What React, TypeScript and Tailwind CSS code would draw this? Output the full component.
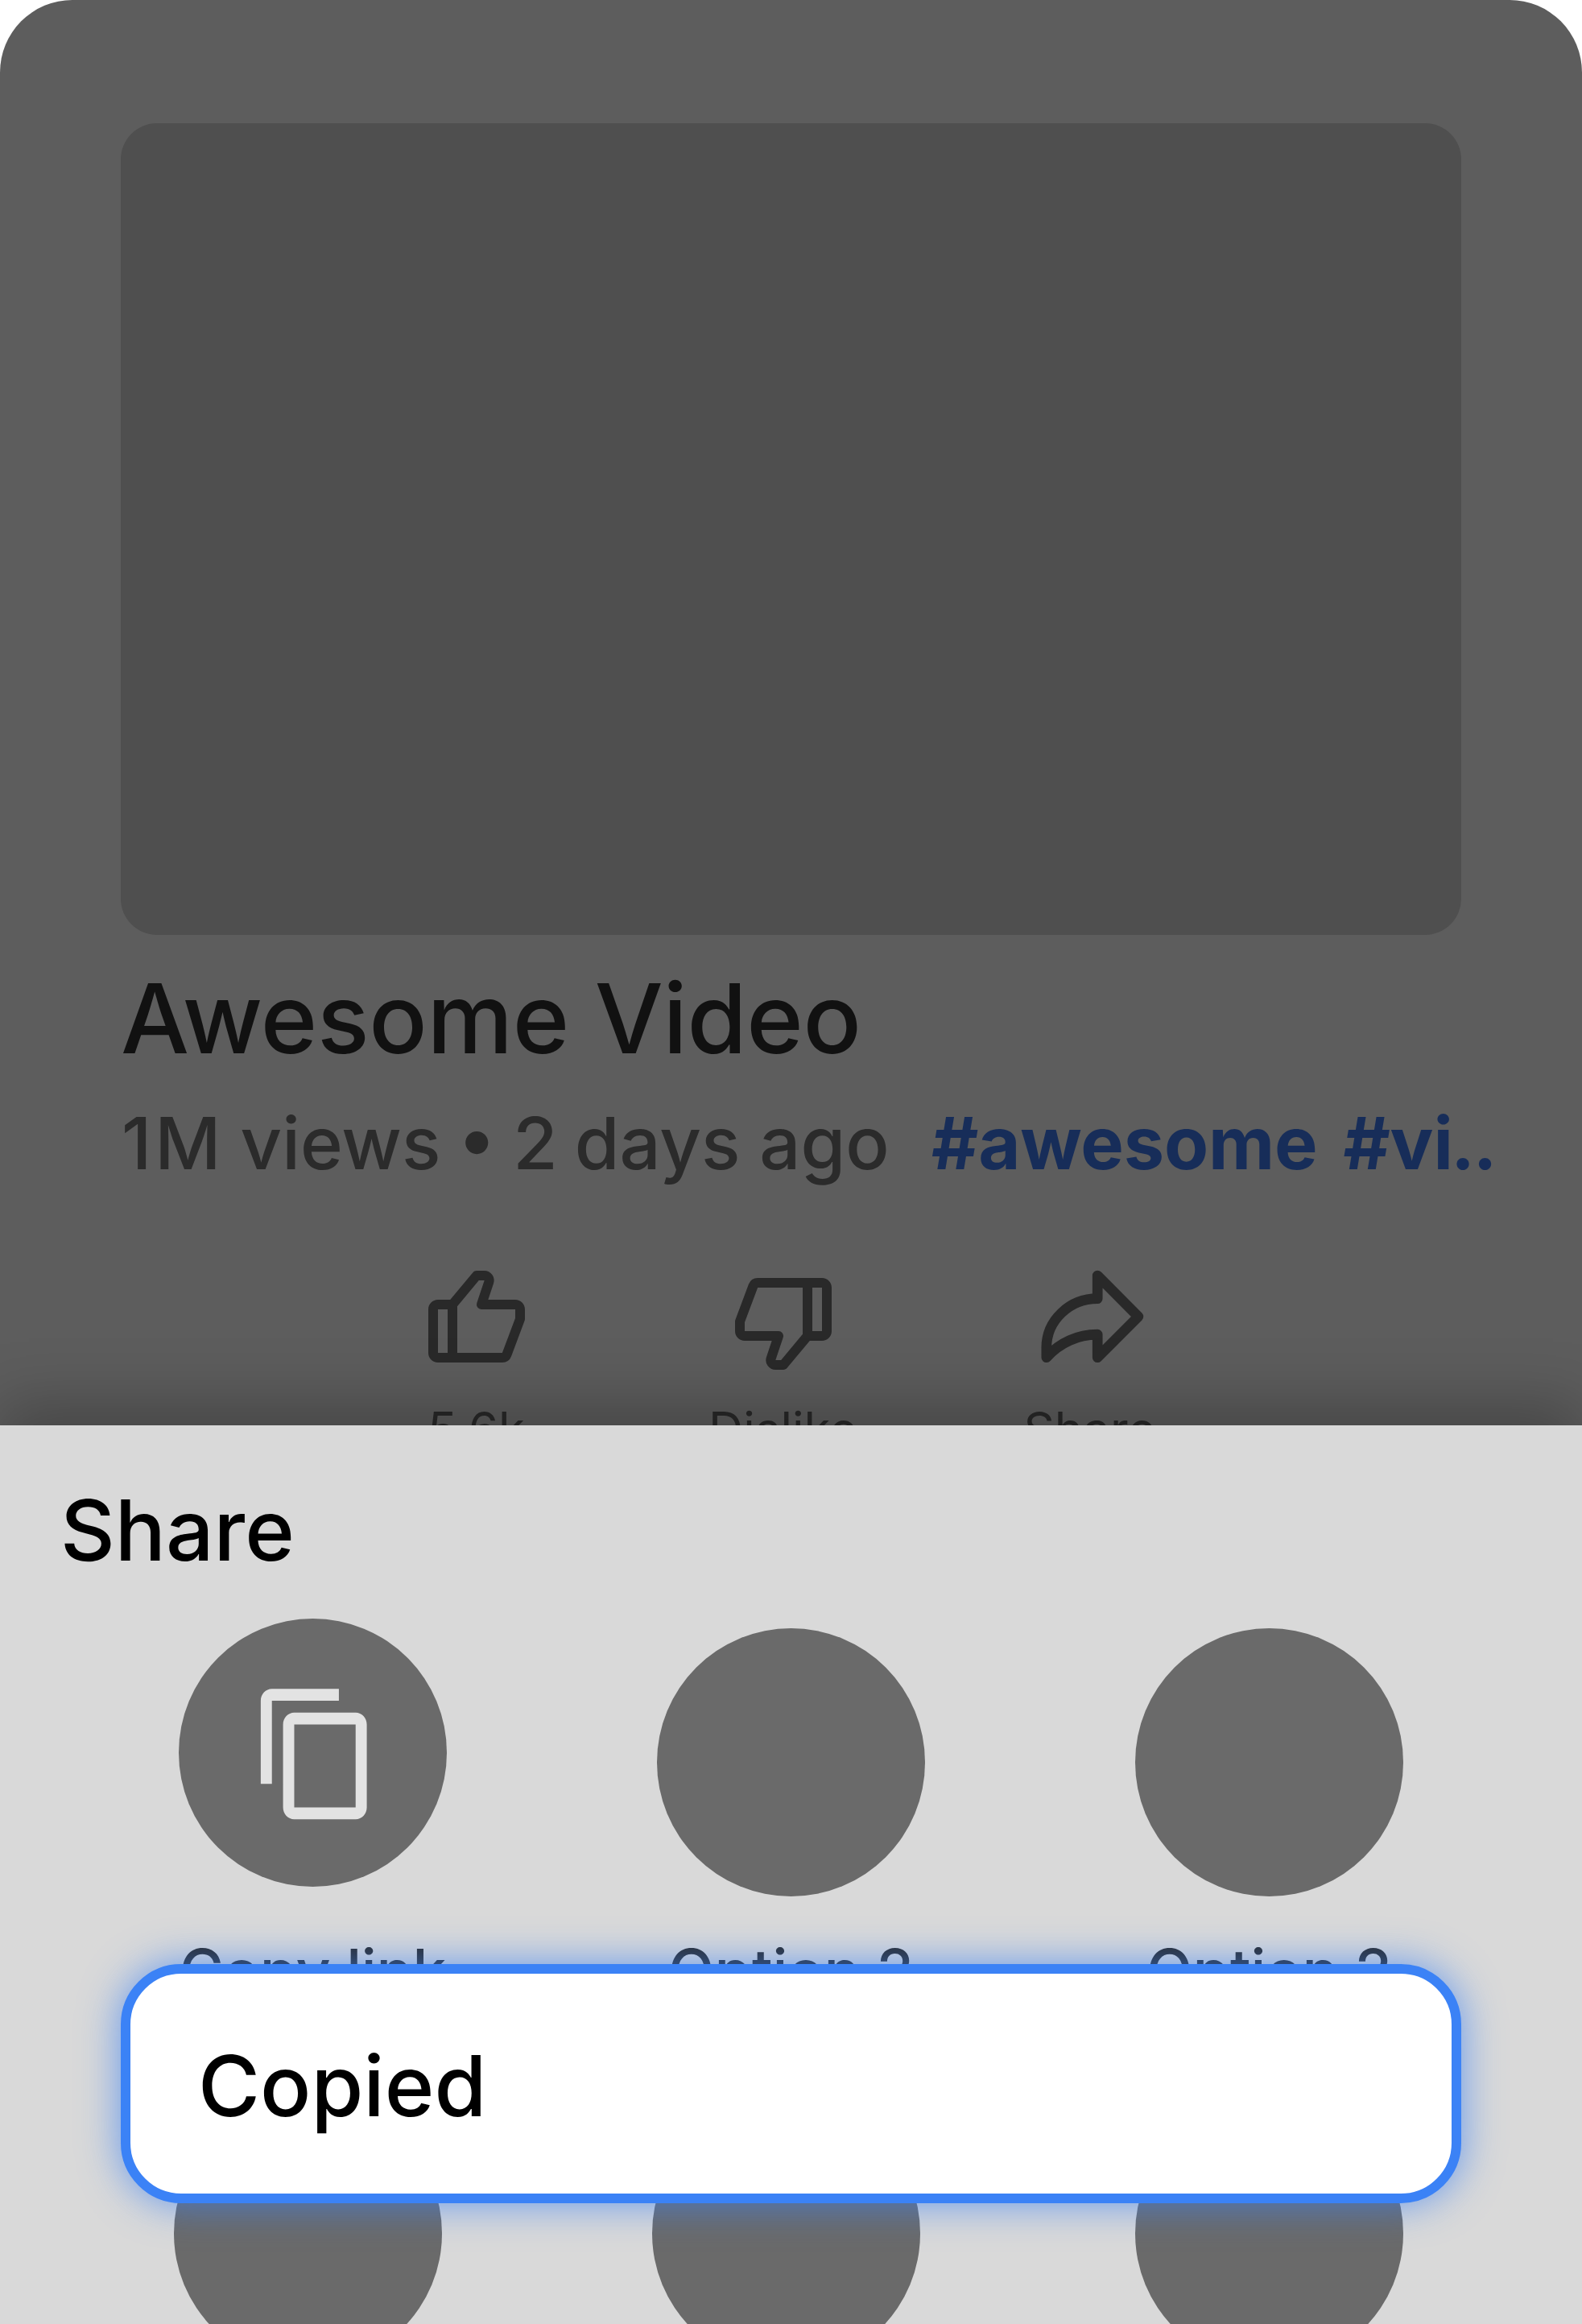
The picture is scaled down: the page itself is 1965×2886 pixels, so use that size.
import type { ReactNode } from "react";
import { BiLike, BiDislike } from "react-icons/bi";

function ShareIcon({ className }: { className?: string }) {
  return (
    <svg
      viewBox="0 0 144 144"
      className={className}
      fill="none"
      stroke="currentColor"
      strokeWidth="12.67"
      strokeLinejoin="round"
      strokeLinecap="round"
    >
      <path d="M81.2 18 L131.9 69 L81.2 119.700 V91.200 A84.500 84.500 0 0 0 17.800 119.700 V107.500 A63.300 60.800 0 0 1 81.200 46.700 Z" />
    </svg>
  );
}

function CopyIcon({ className }: { className?: string }) {
  return (
    <svg viewBox="0 0 24 24" preserveAspectRatio="none" className={className} fill="currentColor">
      <path d="M16 1H4c-1.100 0-2 .9-2 2v14h2V3h12V1zm3 4H8c-1.100 0-2 .9-2 2v14c0 1.100.9 2 2 2h11c1.100 0 2-.9 2-2V7c0-1.100-.9-2-2-2zm0 16H8V7h11v14z" />
    </svg>
  );
}

function Action({ icon, label }: { icon: ReactNode; label: string }) {
  return (
    <div className="flex w-[381px] shrink-0 flex-col items-center">
      <div className="h-[173px]">{icon}</div>
      <span className="text-[60px] leading-[73px]">{label}</span>
    </div>
  );
}

function Circle({ children }: { children?: ReactNode }) {
  return <div className="size-[333px] shrink-0 rounded-full bg-[#6a6a6a]">{children}</div>;
}

export default function App() {
  return (
    <div className="h-[2886px] w-[1965px] overflow-hidden bg-white font-['Inter',sans-serif]">
      <div className="relative flex h-full flex-col overflow-hidden rounded-t-[90px] bg-[#5d5d5d]">
        <main className="h-[1770px] shrink-0 px-[150px] pt-[153px]">
          <div className="h-[1008px] rounded-[45px] bg-[#4f4f4f]" />
          <h1 className="mt-[31px] h-[145px] text-[120px] leading-[145px] font-medium tracking-[-0.3px] whitespace-nowrap text-[#111111]">
            Awesome Video
          </h1>
          <div className="mt-[28px] flex h-[109px] text-[90px] leading-[109px] font-medium whitespace-nowrap text-[#2b2b2b]">
            <p className="w-[1007px] shrink-0 pl-[1px]">
              <span className="tracking-[4px]">1</span>M views
              <span className="[word-spacing:-3px]"> • 2 </span>days ago
            </p>
            <p className="font-bold tracking-[-0.2px] text-[#172d59]">
              <span className="mr-[11px]">#awesome</span> #v<span className="tracking-[-2.700px]">i..</span>
            </p>
          </div>
          <div className="mt-[92px] flex pl-[251px] text-[#292929]">
            <Action icon={<BiLike className="size-[144px]" />} label="5.6k" />
            <Action icon={<BiDislike className="mt-[3px] size-[144px]" />} label="Dislike" />
            <Action icon={<ShareIcon className="size-[144px]" />} label="Share" />
          </div>
        </main>

        <section className="relative flex-1 bg-[#d9d9d9] shadow-[0_-26px_72px_rgba(0,0,0,0.25)]">
          <h2 className="px-[75px] pt-[66px] text-[105px] leading-[127px] font-medium text-black">Share</h2>
          <div className="mt-[47px] flex h-[597px] gap-[261px] pl-[222px] text-[75px] leading-[91px] font-medium whitespace-nowrap text-[#2a2a2a]">
            <div className="flex w-[333px] flex-col items-center">
              <Circle>
                <CopyIcon className="mt-[79.600px] ml-[88px] h-[176.700px] w-[166.400px] text-[#e3e3e3]" />
              </Circle>
              <span className="mt-[59px] tracking-[-0.2px]">Copy link</span>
            </div>
            <div className="flex w-[333px] flex-col items-center pt-[12px]">
              <Circle />
              <span className="mt-[47px]">Option 2</span>
            </div>
            <div className="flex w-[333px] flex-col items-center pt-[12px]">
              <Circle />
              <span className="mt-[47px]">Option 2</span>
            </div>
          </div>
          <div className="flex gap-[261px] pl-[216px]">
            <Circle />
            <Circle />
            <div className="pl-[6px]">
              <Circle />
            </div>
          </div>
        </section>

        <div className="absolute top-[2439px] left-[150px] flex h-[297px] w-[1665px] items-center rounded-[75px] border-[12px] border-[#3b82f6] bg-white pt-[4px] pl-[84px] shadow-[0_0_50px_rgba(59,130,246,0.75)]">
          <span className="text-[105px] leading-[127px] font-medium text-black">Copied</span>
        </div>
      </div>
    </div>
  );
}
